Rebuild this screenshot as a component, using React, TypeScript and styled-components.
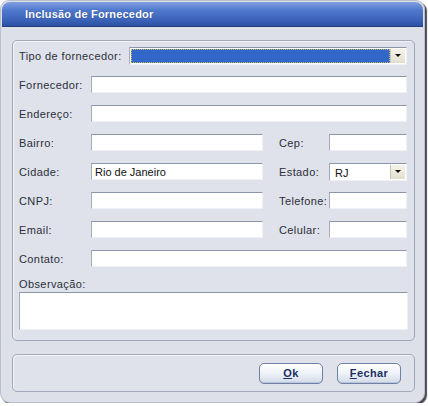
import * as React from 'react';
import styled, { createGlobalStyle } from 'styled-components';

const Global = createGlobalStyle`
  html, body {
    margin: 0;
    padding: 0;
    background: #ffffff;
  }
  body {
    font-family: "Liberation Sans", Arial, sans-serif;
  }
`;

const Window = styled.div`
  width: 425px;
  height: 403px;
  box-sizing: border-box;
  border-radius: 9px 9px 10px 10px;
  background: #dde0e9;
  border: 1px solid #b9bfcc;
  box-shadow: 2px 2px 1px #4a4d55;
  display: flex;
  flex-direction: column;
  overflow: hidden;
`;

const TitleBar = styled.div`
  height: 25px;
  margin: 1px 1px 0 1px;
  border-radius: 8px 8px 0 0;
  background: linear-gradient(#7d9fe0 0%, #4f78cc 35%, #3e66bb 70%, #2c51a3 100%);
  border-bottom: 1px solid #22407e;
  display: flex;
  align-items: center;
  padding-left: 23px;
  color: #ffffff;
  font-size: 11px;
  font-weight: bold;
  letter-spacing: 0.2px;
  text-shadow: 0 0 1px rgba(20, 40, 90, 0.6);
`;

const Body = styled.div`
  flex: 1;
  display: flex;
  flex-direction: column;
  gap: 13px;
  padding: 13px 9px 10px 11px;
`;

const Panel = styled.div`
  border: 1px solid #a2a8b8;
  border-radius: 5px;
  background: #dfe2ea;
  box-shadow: inset 1px 1px 0 #f3f4f8;
`;

const FormPanel = styled(Panel)`
  padding: 6px 6px 10px 6px;
`;

const Grid = styled.div`
  display: grid;
  grid-template-columns: 72px 172px 66px 78px;
  grid-auto-rows: 17px;
  row-gap: 12px;
  align-items: center;
`;

const Label = styled.span<{ $indent?: boolean }>`
  font-size: 11px;
  color: #2b2f3a;
  letter-spacing: 0.4px;
  white-space: nowrap;
  padding-left: ${(p) => (p.$indent ? '16px' : '0')};
`;

const Input = styled.div<{ $span?: number }>`
  grid-column: span ${(p) => p.$span || 1};
  height: 17px;
  box-sizing: border-box;
  background: #ffffff;
  border-top: 1px solid #8d95a8;
  border-left: 1px solid #a4abbb;
  border-right: 1px solid #eef0f5;
  border-bottom: 1px solid #eef0f5;
  font-size: 11px;
  color: #111;
  padding: 2px 3px;
  line-height: 12px;
`;

const TipoRow = styled.div`
  grid-column: 1 / -1;
  display: flex;
  align-items: center;
  gap: 7px;
`;

const Select = styled.div<{ $focus?: boolean }>`
  flex: 1;
  height: 18px;
  box-sizing: border-box;
  display: flex;
  background: #ffffff;
  border-top: 1px solid #8d95a8;
  border-left: 1px solid #a4abbb;
  border-right: 1px solid #eef0f5;
  border-bottom: 1px solid #eef0f5;
  padding: 1px;
`;

const SelectValue = styled.div<{ $focus?: boolean }>`
  flex: 1;
  box-sizing: border-box;
  font-size: 11px;
  line-height: 12px;
  padding: 1px 3px;
  color: #111;
  background: ${(p) => (p.$focus ? '#3266c9' : '#ffffff')};
  border: ${(p) => (p.$focus ? '1px dotted #9aa6b8' : '1px solid transparent')};
  outline: ${(p) => (p.$focus ? '1px dotted #c8b86a' : 'none')};
  outline-offset: -1px;
`;

const Arrow = styled.div`
  width: 14px;
  background: linear-gradient(#f6f4ea, #e3dfcf);
  border-left: 1px solid #c9c5b4;
  display: flex;
  align-items: center;
  justify-content: center;
  &::after {
    content: '';
    border-left: 3px solid transparent;
    border-right: 3px solid transparent;
    border-top: 3px solid #111;
  }
`;

const ObsBlock = styled.div`
  display: flex;
  flex-direction: column;
  gap: 2px;
  margin-top: 11px;
`;

const TextArea = styled(Input)`
  height: 38px;
`;

const ButtonPanel = styled(Panel)`
  height: 36px;
  display: flex;
  align-items: center;
  justify-content: flex-end;
  gap: 14px;
  padding-right: 13px;
`;

const Button = styled.button`
  width: 64px;
  height: 21px;
  border: 1px solid #6f82a6;
  border-radius: 5px;
  background: linear-gradient(#ffffff 0%, #f0f3f8 45%, #d3dbe9 100%);
  box-shadow: inset 0 -1px 0 #b9c4d8;
  font-family: "Liberation Sans", Arial, sans-serif;
  font-size: 11px;
  font-weight: bold;
  color: #1c2f63;
  letter-spacing: 0.4px;
  padding: 0;
  u {
    text-decoration: underline;
  }
`;

export default function App() {
  return (
    <>
      <Global />
      <Window>
        <TitleBar>Inclusão de Fornecedor</TitleBar>
        <Body>
          <FormPanel>
            <Grid>
              <TipoRow>
                <Label>Tipo de fornecedor:</Label>
                <Select>
                  <SelectValue $focus />
                  <Arrow />
                </Select>
              </TipoRow>
              <Label>Fornecedor:</Label>
              <Input $span={3} />
              <Label>Endereço:</Label>
              <Input $span={3} />
              <Label>Bairro:</Label>
              <Input />
              <Label $indent>Cep:</Label>
              <Input />
              <Label>Cidade:</Label>
              <Input>Rio de Janeiro</Input>
              <Label $indent>Estado:</Label>
              <Select>
                <SelectValue>RJ</SelectValue>
                <Arrow />
              </Select>
              <Label>CNPJ:</Label>
              <Input />
              <Label $indent>Telefone:</Label>
              <Input />
              <Label>Email:</Label>
              <Input />
              <Label $indent>Celular:</Label>
              <Input />
              <Label>Contato:</Label>
              <Input $span={3} />
            </Grid>
            <ObsBlock>
              <Label>Observação:</Label>
              <TextArea />
            </ObsBlock>
          </FormPanel>
          <ButtonPanel>
            <Button>
              <u>O</u>k
            </Button>
            <Button>
              <u>F</u>echar
            </Button>
          </ButtonPanel>
        </Body>
      </Window>
    </>
  );
}
